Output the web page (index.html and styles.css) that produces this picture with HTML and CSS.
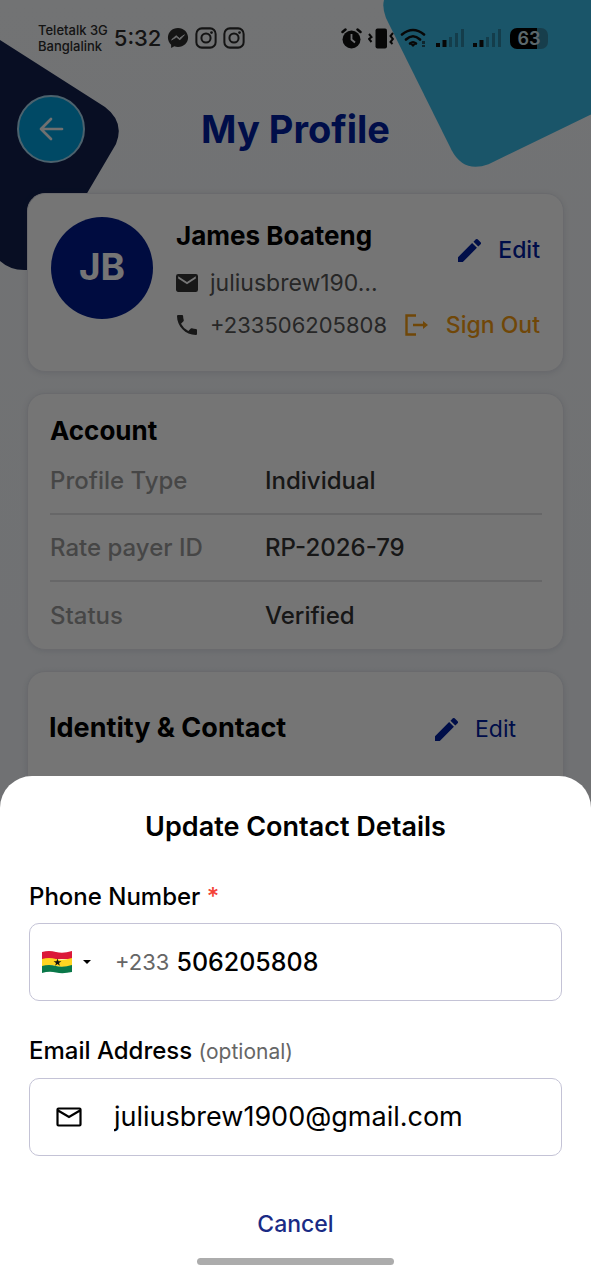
FILE: index.html
```html
<!DOCTYPE html>
<html lang="en">
<head>
<meta charset="utf-8">
<meta name="viewport" content="width=device-width, initial-scale=1">
<title>My Profile</title>
<link rel="stylesheet" href="styles.css">
</head>
<body>
<svg class="defs" aria-hidden="true">
  <symbol id="pencil" viewBox="3 3 18 18"><path d="M3 17.25V21h3.75L17.81 9.94l-3.75-3.75L3 17.25zM20.71 7.04a1 1 0 0 0 0-1.41l-2.34-2.34a1 1 0 0 0-1.41 0l-1.83 1.83 3.75 3.75 1.83-1.83z"/></symbol>
  <symbol id="camera" viewBox="0 0 24 24"><g fill="none" stroke="currentColor" stroke-width="2.2"><rect x="1.5" y="1.5" width="21" height="21" rx="6"/><circle cx="12" cy="12" r="5"/></g><circle cx="18" cy="6" r="1.5"/></symbol>
  <symbol id="signal" viewBox="0 0 28 18"><path d="M0 14h4v4H0zM6.500 11h4v7h-4z"/><path opacity=".3" d="M13 8h3v10h-3zM19 4h3v14h-3zM25 0h3v18h-3z"/></symbol>
</svg>
<div class="screen">
  <svg class="shape shape-navy" viewBox="0 0 120 230" aria-hidden="true"><path d="M0 0 105 67Q125 82 116 104L76 172V230H24Q10 230 0 221Z"/></svg>
  <svg class="shape shape-cyan" viewBox="0 0 210 170" aria-hidden="true"><path d="M2 0Q0 8 4 18L70 151Q82 174 107 165L210 115V0Z"/></svg>

  <div class="status">
    <div class="carrier">Teletalk 3G<br>Banglalink</div>
    <div class="clock">5:32</div>
    <svg class="notice" viewBox="0 0 24 24"><path d="M12 1C5.700 1 1 5.500 1 11.500c0 3.200 1.400 6 3.500 7.800V23l3.500-1.900c1.200.4 2.600.6 4 .6 6.300 0 11-4.400 11-10.200S18.300 1 12 1z"/><path d="m5 14 5-4.500 3.500 3L19 8.500l-5 5.500-3.500-3z" fill="#f4f6fa" stroke="#f4f6fa"/></svg>
    <svg class="notice"><use href="#camera"/></svg>
    <svg class="notice"><use href="#camera"/></svg>
    <div class="indicators">
      <svg width="21" height="21" viewBox="0 0 21 21"><path d="M4.500 1.500 1.500 4M16.500 1.500l3 2.500" stroke="currentColor" stroke-width="2.500" stroke-linecap="round"/><circle cx="10.500" cy="11.500" r="9"/><path d="M10.500 6v5.500l3.500 3" fill="none" stroke="#f4f6fa" stroke-width="1.800"/></svg>
      <svg width="26" height="21" viewBox="0 0 26 21"><rect x="7.500" y=".5" width="11.500" height="20" rx="2"/><path d="m1 6 2.500 3L1 11l2.500 3M25 5l-2.500 3 2.500 3-2.500 3 2 2" fill="none" stroke="currentColor" stroke-width="2"/></svg>
      <svg width="27" height="20" viewBox="0 0 27 20"><g fill="none" stroke="currentColor" stroke-width="2.600" stroke-linecap="round"><path d="M2 6.500Q13-2.500 24 6.500M6 11.500Q13 5 20 11.500"/><path d="M10 15.500q3-2.500 6 0"/></g><path d="m10 16 3 3 3-3z"/><path d="M22 13h3v3h-3zM22 17h3v2h-3z" opacity=".6"/></svg>
      <svg class="sim1" width="28" height="18"><use href="#signal"/></svg>
      <svg class="sim2" width="28" height="18"><use href="#signal"/></svg>
      <div class="battery">63</div>
    </div>
  </div>

  <header class="header">
    <button class="back" aria-label="Back"><svg width="26" height="26" viewBox="0 0 26 26"><path d="M24 13H3M13 3 3 13l10 10" fill="none" stroke="currentColor" stroke-width="2.700" stroke-linecap="round" stroke-linejoin="round"/></svg></button>
    <h1>My Profile</h1>
  </header>

  <main class="cards">
    <section class="card person">
      <div class="avatar">JB</div>
      <div class="details">
        <h2>James Boateng</h2>
        <p class="line email"><svg width="22" height="18" viewBox="2 4 20 16" preserveAspectRatio="none"><path d="M20 4H4a2 2 0 0 0-2 2v12c0 1.100.9 2 2 2h16a2 2 0 0 0 2-2V6a2 2 0 0 0-2-2zm0 4-8 5-8-5V6l8 5 8-5v2z"/></svg><span>juliusbrew190…</span></p>
        <p class="line tel"><svg width="22" height="20" viewBox="3 3 18 18"><path d="M6.620 10.790a15.150 15.150 0 0 0 6.590 6.590l2.200-2.200a1 1 0 0 1 1.020-.24c1.120.37 2.330.57 3.570.57a1 1 0 0 1 1 1V20a1 1 0 0 1-1 1C10.610 21 3 13.390 3 4a1 1 0 0 1 1-1h3.500a1 1 0 0 1 1 1c0 1.250.2 2.450.57 3.570a1 1 0 0 1-.25 1.020l-2.200 2.200z"/></svg><span>+233506205808</span></p>
      </div>
      <div class="actions">
        <button class="link strong"><svg width="23" height="23"><use href="#pencil"/></svg>Edit</button>
        <button class="link out"><svg width="24" height="22" viewBox="0 0 24 22"><path d="M11 1.500H1.500v19H11M8 11h12" fill="none" stroke="currentColor" stroke-width="2.400"/><path d="m18 7 5 4-5 4z"/></svg>Sign Out</button>
      </div>
    </section>

    <section class="card account">
      <h2>Account</h2>
      <dl>
        <div><dt>Profile Type</dt><dd>Individual</dd></div>
        <div><dt>Rate payer ID</dt><dd>RP-2026-79</dd></div>
        <div><dt>Status</dt><dd>Verified</dd></div>
      </dl>
    </section>

    <section class="card identity">
      <h2>Identity &amp; Contact</h2>
      <button class="link"><svg width="23" height="23"><use href="#pencil"/></svg>Edit</button>
    </section>
  </main>
</div>

<div class="scrim"></div>

<form class="sheet" role="dialog" aria-labelledby="sheet-title">
  <h2 id="sheet-title">Update Contact Details</h2>
  <label for="phone">Phone Number <span class="required">*</span></label>
  <div class="field phone">
    <button type="button" class="country" aria-label="Country: Ghana">
      <svg width="32" height="24" viewBox="0 0 32 24"><path fill="#db1838" d="M1 2q7-2 14 0t16-1v8H1z"/><path fill="#ffd521" d="M1 9q7-2 14 0t16-1v8q-9 2-16 0t-14 1z"/><path fill="#0a7849" d="M1 16q7-2 14 0t16-1v7q-9 2-16 .5T1 23z"/><path fill="#111" d="m16.500 8.500 1 2.700h2.900L18 13l.9 2.800-2.400-1.700-2.400 1.700L15 13l-2.400-1.800h2.900z"/></svg>
      <svg width="8" height="4" viewBox="0 0 8 4"><path d="M0 0h8L4 4z"/></svg>
    </button>
    <span class="prefix">+233</span>
    <input id="phone" type="tel" value="506205808">
  </div>
  <label for="email">Email Address <span class="optional">(optional)</span></label>
  <div class="field mail">
    <svg width="26" height="20" viewBox="0 0 26 20"><path d="M2.500 1.500h21q1 0 1 1v15q0 1-1 1h-21q-1 0-1-1v-15q0-1 1-1zM2 3.500l11 6.500 11-6.500" fill="none" stroke="currentColor" stroke-width="2.200"/></svg>
    <input id="email" type="email" value="juliusbrew1900@gmail.com">
  </div>
  <button type="button" class="cancel">Cancel</button>
  <div class="home-bar"></div>
</form>
</body>
</html>
```

FILE: styles.css
```css
* { box-sizing: border-box; }
body {
  margin: 0;
  font-family: Inter, "Noto Sans", sans-serif;
  font-size: 23px;
  line-height: 28px;
  color: #000;
}
h1, h2, p, dl, dd { margin: 0; }
h2 { font-size: 26px; line-height: 32px; font-weight: 700; }
button, input { font: inherit; color: inherit; background: none; border: 0; padding: 0; }
button { cursor: pointer; }
svg { fill: currentColor; flex: none; }
.defs { position: absolute; width: 0; height: 0; }

.screen {
  position: relative;
  height: 100vh;
  overflow: hidden;
  background: linear-gradient(#f8fafc, #f1f4fa);
}
.shape { position: absolute; }
.shape-navy { left: 0; top: 40px; width: 120px; color: #12204e; }
.shape-cyan { right: 0; top: 0; width: 209px; color: #3ab9e4; }

.status {
  position: relative;
  display: flex;
  align-items: center;
  gap: 6px;
  height: 76px;
  padding: 0 43px 0 38px;
  color: #2c2c2c;
}
.carrier { font-size: 13px; line-height: 16px; font-weight: 500; }
.clock { font-size: 22px; font-weight: 500; }
.notice { width: 22px; height: 22px; }
.indicators { display: flex; align-items: center; gap: 6px; margin-left: auto; color: #111; }
.sim1, .sim2 { margin-left: 3px; }
.sim2 { margin-right: 3px; }
.battery {
  width: 38px;
  height: 21px;
  border-radius: 7px;
  background: linear-gradient(90deg, #000 70%, #3487a5 70%);
  color: #c9e2ec;
  font-size: 18px;
  line-height: 21px;
  font-weight: 600;
  text-align: center;
}

.header {
  position: relative;
  display: grid;
  grid-template-columns: 68px 1fr 68px;
  align-items: center;
  padding: 19px 17px 30px;
}
.header h1 { font-size: 38px; line-height: 48px; color: #0020a0; text-align: center; }
.back {
  display: grid;
  place-items: center;
  height: 68px;
  border: 2px solid #a5d5ee;
  border-radius: 50%;
  background: #00a0dc;
  color: #f5f5f5;
}

.cards { position: relative; display: grid; gap: 21px; padding: 0 27px; }
.card {
  border: 1px solid #e6e8ee;
  border-radius: 18px;
  background: #fff;
  box-shadow: 0 1px 6px rgba(40, 50, 80, .12);
}
.person { display: flex; height: 179px; padding: 23px; }
.avatar {
  flex: none;
  width: 102px;
  height: 102px;
  border-radius: 50%;
  background: #001c8c;
  color: #fff;
  font-size: 37px;
  line-height: 100px;
  font-weight: 700;
  text-align: center;
}
.details { flex: 1; min-width: 0; padding-left: 23px; }
.details h2 { margin-top: 3px; }
.line { display: flex; align-items: center; gap: 12px; margin-top: 14px; color: #333; }
.line span { color: #555; }
.email { margin-top: 17px; }
.tel { font-size: 22px; }
.actions { display: flex; flex-direction: column; align-items: flex-end; padding-top: 19px; }
.link { display: flex; align-items: center; gap: 17px; color: #0020a0; white-space: nowrap; }
.strong, .out { font-weight: 500; }
.out { margin-top: 47px; color: #f39c12; }

.account { padding: 21px 21px 0 22px; }
.account h2 { margin-bottom: 1px; }
dl div {
  display: grid;
  grid-template-columns: 215px 1fr;
  align-items: center;
  height: 67px;
  border-bottom: 2px solid #e0e0e2;
  font-size: 24px;
}
dl div:last-child { border: 0; }
dt { color: #9a9a9a; font-weight: 500; }
dd { color: #333; font-weight: 500; font-size: 24px; }
.identity { display: flex; justify-content: space-between; height: 180px; padding: 40px 47px 0 21px; }
.identity h2 { font-size: 27px; }
.identity .link { height: 34px; }

.scrim { position: fixed; inset: 0; background: rgba(0, 0, 0, .54); }

.sheet {
  position: fixed;
  inset: auto 0 0;
  display: flex;
  flex-direction: column;
  padding: 35px 29px 15px;
  border-radius: 32px 32px 0 0;
  background: #fff;
}
.sheet h2 { font-size: 27px; font-weight: 600; text-align: center; margin-bottom: 4px; }
.sheet label { margin-top: 36px; font-size: 24px; font-weight: 500; }
.required { color: #f44336; }
.optional { color: #666; font-size: 21px; font-weight: 400; }
.field {
  display: flex;
  align-items: center;
  height: 78px;
  margin-top: 12px;
  border: 1px solid #c4c3d6;
  border-radius: 10px;
}
.field input { flex: 1; min-width: 0; outline: 0; line-height: 32px; }
.phone { padding-left: 11px; }
.phone input { font-size: 25px; font-weight: 500; }
.country { display: flex; align-items: center; gap: 10px; margin-right: 24px; }
.prefix { color: #666; font-size: 22px; margin-right: 7px; }
.mail { padding-left: 26px; gap: 32px; }
.mail input { font-size: 27px; font-weight: 400; }
.cancel { align-self: center; margin-top: 52px; line-height: 32px; color: #1a2b85; font-weight: 500; }
.home-bar { align-self: center; width: 37%; height: 7px; margin-top: 18px; border-radius: 4px; background: #acacac; }
```
